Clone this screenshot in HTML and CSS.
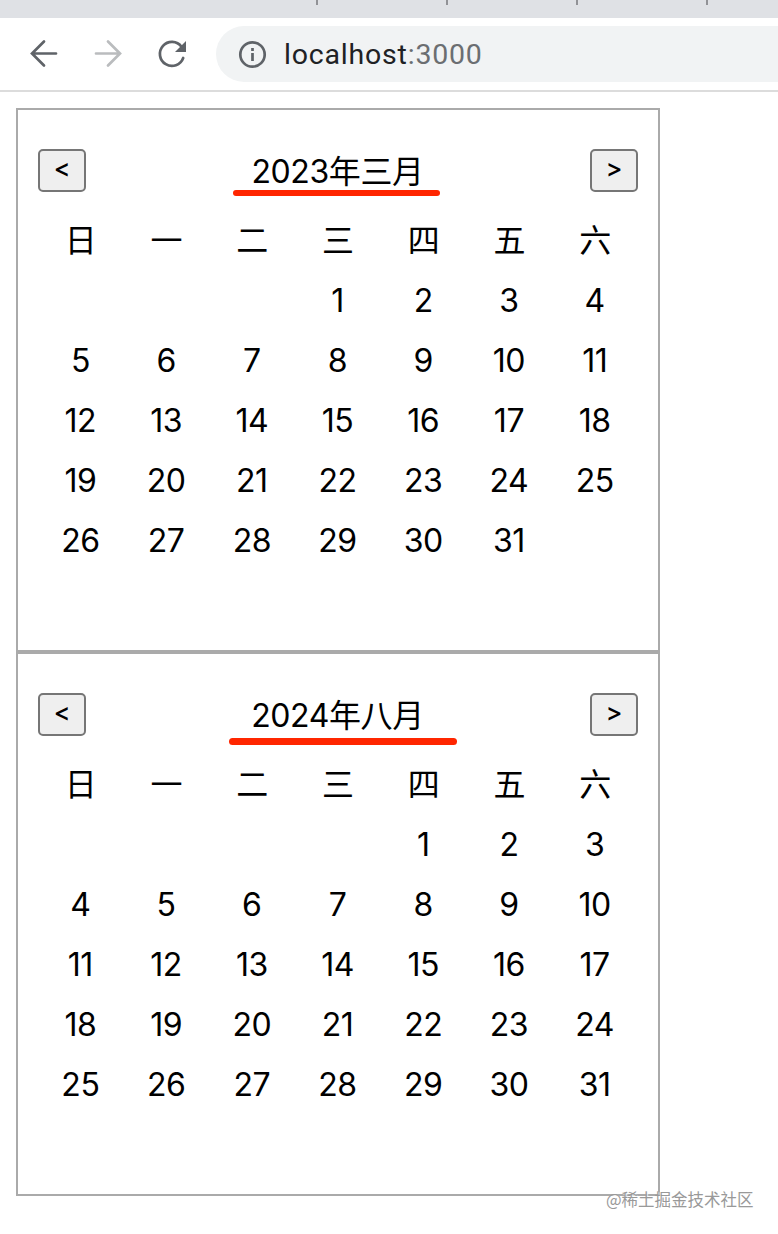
FILE: index.html
```html
<!DOCTYPE html>
<html lang="zh">
<head>
<meta charset="utf-8">
<title>localhost:3000</title>
<link rel="stylesheet" href="styles.css">
</head>
<body>
<div class="tabs"><i></i><i></i><i></i><i></i></div>
<div class="toolbar">
  <svg class="nav" width="32" height="32" viewBox="0 0 32 32"><path d="M28 15.500H4.500M16 3.500L4 15.500L16 27.500"/></svg>
  <svg class="nav off" width="32" height="32" viewBox="0 0 32 32"><path d="M4 15.500H27.500M16 3.500L28 15.500L16 27.500"/></svg>
  <svg class="nav" width="32" height="32" viewBox="0 0 32 32"><path d="M27.200 20A12 12 0 1 1 25.500 8.700"/><path class="solid" d="M30 3V14H19Z"/></svg>
  <div class="address">
    <svg class="info" width="29" height="29" viewBox="0 0 29 29"><circle cx="14.500" cy="14.500" r="12.200"/><path d="M14.500 13V21M14.500 8V11"/></svg>
    <span class="url">localhost<span class="port">:3000</span></span>
  </div>
</div>
<main class="page">
  <section class="calendar">
    <div class="header"><button>&lt;</button><div class="title">2023年三月</div><button>&gt;</button></div>
    <div class="days">
      <b>日</b><b>一</b><b>二</b><b>三</b><b>四</b><b>五</b><b>六</b>
      <span></span><span></span><span></span><span>1</span><span>2</span><span>3</span><span>4</span>
      <span>5</span><span>6</span><span>7</span><span>8</span><span>9</span><span>10</span><span>11</span>
      <span>12</span><span>13</span><span>14</span><span>15</span><span>16</span><span>17</span><span>18</span>
      <span>19</span><span>20</span><span>21</span><span>22</span><span>23</span><span>24</span><span>25</span>
      <span>26</span><span>27</span><span>28</span><span>29</span><span>30</span><span>31</span>
    </div>
    <div class="mark mark-first"></div>
  </section>
  <section class="calendar">
    <div class="header"><button>&lt;</button><div class="title">2024年八月</div><button>&gt;</button></div>
    <div class="days">
      <b>日</b><b>一</b><b>二</b><b>三</b><b>四</b><b>五</b><b>六</b>
      <span></span><span></span><span></span><span></span><span>1</span><span>2</span><span>3</span>
      <span>4</span><span>5</span><span>6</span><span>7</span><span>8</span><span>9</span><span>10</span>
      <span>11</span><span>12</span><span>13</span><span>14</span><span>15</span><span>16</span><span>17</span>
      <span>18</span><span>19</span><span>20</span><span>21</span><span>22</span><span>23</span><span>24</span>
      <span>25</span><span>26</span><span>27</span><span>28</span><span>29</span><span>30</span><span>31</span>
    </div>
    <div class="mark mark-second"></div>
  </section>
</main>
<div class="watermark">@稀土掘金技术社区</div>
</body>
</html>
```
FILE: styles.css
```css
* { box-sizing: border-box; }
body {
  margin: 0;
  height: 1234px;
  position: relative;
  overflow: hidden;
  background: #fff;
  color: #000;
  font-family: Inter, "Noto Sans CJK SC", sans-serif;
}
.tabs {
  height: 18px;
  padding-left: 316px;
  display: flex;
  gap: 128px;
  background: #dfe1e5;
}
.tabs i { flex: none; width: 2px; height: 5px; background: #919296; }
.toolbar {
  height: 74px;
  padding: 8px 0 8px 28px;
  display: flex;
  align-items: center;
  gap: 32px;
  border-bottom: 2px solid #dcdcdc;
}
.nav {
  flex: none;
  fill: none;
  stroke: #5f6368;
  stroke-width: 2.7;
  stroke-linecap: round;
}
.off { stroke: #babcbe; }
.nav .solid { fill: #5f6368; stroke: none; }
.address {
  flex: 1;
  height: 56px;
  margin-left: -4px;
  padding-left: 22px;
  display: flex;
  align-items: center;
  gap: 17px;
  border-radius: 28px 0 0 28px;
  background: #f1f3f4;
}
.info { margin-top: 1px; fill: none; stroke: #5f6368; stroke-width: 2.7; }
.url {
  padding-top: 2px;
  font: 28.5px/54px Roboto, sans-serif;
  letter-spacing: 0.8px;
  color: #202124;
}
.port { color: #6b6e71; }
.page { padding: 16px; }
.calendar {
  position: relative;
  width: 644px;
  height: 544px;
  padding: 20px;
  border: 2px solid #aaa;
}
.header {
  height: 80px;
  display: flex;
  align-items: center;
  justify-content: space-between;
  font-size: 32px;
}
.title { padding: 0 1px 3px 0; letter-spacing: -0.4px; }
button {
  width: 48px;
  height: 43px;
  margin-top: 1px;
  padding: 0 0 4px;
  border: 2px solid #767676;
  border-radius: 5px;
  background: #efefef;
  color: #000;
  font: 500 25px/35px Inter, sans-serif;
}
.days {
  display: grid;
  grid-template-columns: repeat(7, 1fr);
  grid-auto-rows: 60px;
  font-size: 32px;
  line-height: 62px;
  text-align: center;
}
.days b { font-weight: 400; }
.days span { padding-right: 1px; letter-spacing: -0.5px; }
.mark {
  position: absolute;
  border-radius: 4px;
  background: #ff2600;
}
.mark-first { left: 215px; top: 80px; width: 207px; height: 6px; }
.mark-second { left: 211px; top: 84px; width: 228px; height: 7px; }
.watermark {
  position: absolute;
  left: 606px;
  top: 1187px;
  font: 400 16.5px/24px "Noto Sans CJK SC", sans-serif;
  color: #999;
  text-shadow: 1px 1px 1px #fff;
  white-space: nowrap;
}
```
